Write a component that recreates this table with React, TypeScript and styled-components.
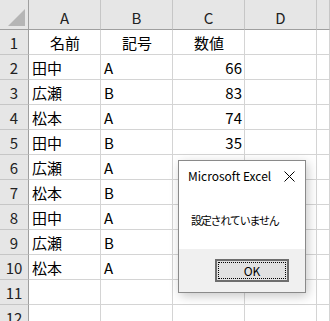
import React from 'react';
import styled, { createGlobalStyle } from 'styled-components';

const GlobalStyle = createGlobalStyle`
	html,
	body {
		margin: 0;
		padding: 0;
		background: #ffffff;
		overflow: hidden;
	}
	body {
		font-family: 'Noto Sans CJK JP', 'Noto Sans', sans-serif;
	}
`;

const COLUMNS = ['A', 'B', 'C', 'D', ''];

type Align = 'left' | 'center' | 'right';

const ROWS: { a: string; b: string; c: string; align?: Align }[] = [
	{ a: '名前', b: '記号', c: '数値', align: 'center' },
	{ a: '田中', b: 'A', c: '66' },
	{ a: '広瀬', b: 'B', c: '83' },
	{ a: '松本', b: 'A', c: '74' },
	{ a: '田中', b: 'B', c: '35' },
	{ a: '広瀬', b: 'A', c: '' },
	{ a: '松本', b: 'B', c: '' },
	{ a: '田中', b: 'A', c: '' },
	{ a: '広瀬', b: 'B', c: '' },
	{ a: '松本', b: 'A', c: '' },
	{ a: '', b: '', c: '' },
	{ a: '', b: '', c: '' },
];

const App = () => (
	<>
		<GlobalStyle />
		<Sheet>
			<Grid>
				<Corner>
					<svg width="28" height="29" viewBox="0 0 28 29">
						<polygon points="8,26 25,26 25,9" fill="#b5b5b5" />
					</svg>
				</Corner>
				{COLUMNS.map((col, i) => (
					<ColumnHeader key={i}>{col}</ColumnHeader>
				))}
				{ROWS.map((row, i) => (
					<React.Fragment key={i}>
						<RowHeader>{i + 1}</RowHeader>
						<Cell align={row.align ?? 'left'}>{row.a}</Cell>
						<Cell align={row.align ?? 'left'}>{row.b}</Cell>
						<Cell align={row.align ?? 'right'}>{row.c}</Cell>
						<Cell align="left" />
						<Cell align="left" />
					</React.Fragment>
				))}
			</Grid>

			<Dialog>
				<TitleBar>
					<Title>Microsoft Excel</Title>
					<CloseIcon width="11" height="11" viewBox="0 0 11 11">
						<path d="M0.5 0.5 L10.5 10.5 M10.5 0.5 L0.5 10.5" stroke="#000" strokeWidth="1" fill="none" />
					</CloseIcon>
				</TitleBar>
				<Body>
					<Message>設定されていません</Message>
				</Body>
				<Footer>
					<OkButton>
						<FocusRing>OK</FocusRing>
					</OkButton>
				</Footer>
			</Dialog>
		</Sheet>
	</>
);

const Sheet = styled.div`
	position: relative;
	width: 330px;
	height: 321px;
	overflow: hidden;
	background: #ffffff;
`;

const Grid = styled.div`
	display: grid;
	grid-template-columns: 29px repeat(4, 72px) 1fr;
	grid-template-rows: 30px repeat(12, 25px);
	font-size: 15px;
	color: #000;
`;

const Corner = styled.div`
	background: #e6e6e6;
	border-right: 1px solid #9f9f9f;
	border-bottom: 1px solid #9f9f9f;
	svg {
		display: block;
	}
`;

const ColumnHeader = styled.div`
	display: flex;
	justify-content: center;
	align-items: center;
	padding-top: 5px;
	background: #e6e6e6;
	border-right: 1px solid #c6c6c6;
	border-bottom: 1px solid #9f9f9f;
	color: #222;
	line-height: 1;
`;

const RowHeader = styled.div`
	display: flex;
	justify-content: center;
	align-items: center;
	background: #e6e6e6;
	border-right: 1px solid #9f9f9f;
	border-bottom: 1px solid #c6c6c6;
	color: #222;
	line-height: 1;
`;

const Cell = styled.div<{ align: Align }>`
	display: flex;
	align-items: center;
	justify-content: ${(p) =>
		p.align === 'center' ? 'center' : p.align === 'right' ? 'flex-end' : 'flex-start'};
	padding: 0 2px 0 3px;
	border-right: 1px solid #d4d4d4;
	border-bottom: 1px solid #d4d4d4;
	white-space: nowrap;
	line-height: 1;
`;

const Dialog = styled.div`
	position: absolute;
	left: 178px;
	top: 160px;
	width: 128px;
	height: 133px;
	box-sizing: border-box;
	display: flex;
	flex-direction: column;
	background: #ffffff;
	border: 1px solid #8a8a8a;
	box-shadow: 2px 3px 10px rgba(0, 0, 0, 0.22);
	font-size: 12px;
	color: #000;
`;

const TitleBar = styled.div`
	height: 30px;
	display: flex;
	align-items: center;
	justify-content: space-between;
	padding: 0 10px 0 9px;
`;

const Title = styled.span`
	line-height: 1;
`;

const CloseIcon = styled.svg`
	display: block;
`;

const Body = styled.div`
	flex: 1;
	display: flex;
	align-items: center;
	padding-left: 12px;
`;

const Message = styled.span`
	line-height: 1;
	font-size: 11px;
	letter-spacing: -1.2px;
	white-space: nowrap;
`;

const Footer = styled.div`
	height: 43px;
	display: flex;
	justify-content: flex-end;
	align-items: flex-start;
	padding: 10px 16px 0 0;
	box-sizing: border-box;
	background: #f0f0f0;
`;

const OkButton = styled.div`
	width: 74px;
	height: 23px;
	box-sizing: border-box;
	border: 2px solid #6e6e6e;
	background: #e1e1e1;
	padding: 2px;
	display: flex;
`;

const FocusRing = styled.div`
	flex: 1;
	display: flex;
	align-items: center;
	justify-content: center;
	outline: 1px dotted #000;
	line-height: 1;
	font-size: 12px;
	color: #000;
`;

export default App;
